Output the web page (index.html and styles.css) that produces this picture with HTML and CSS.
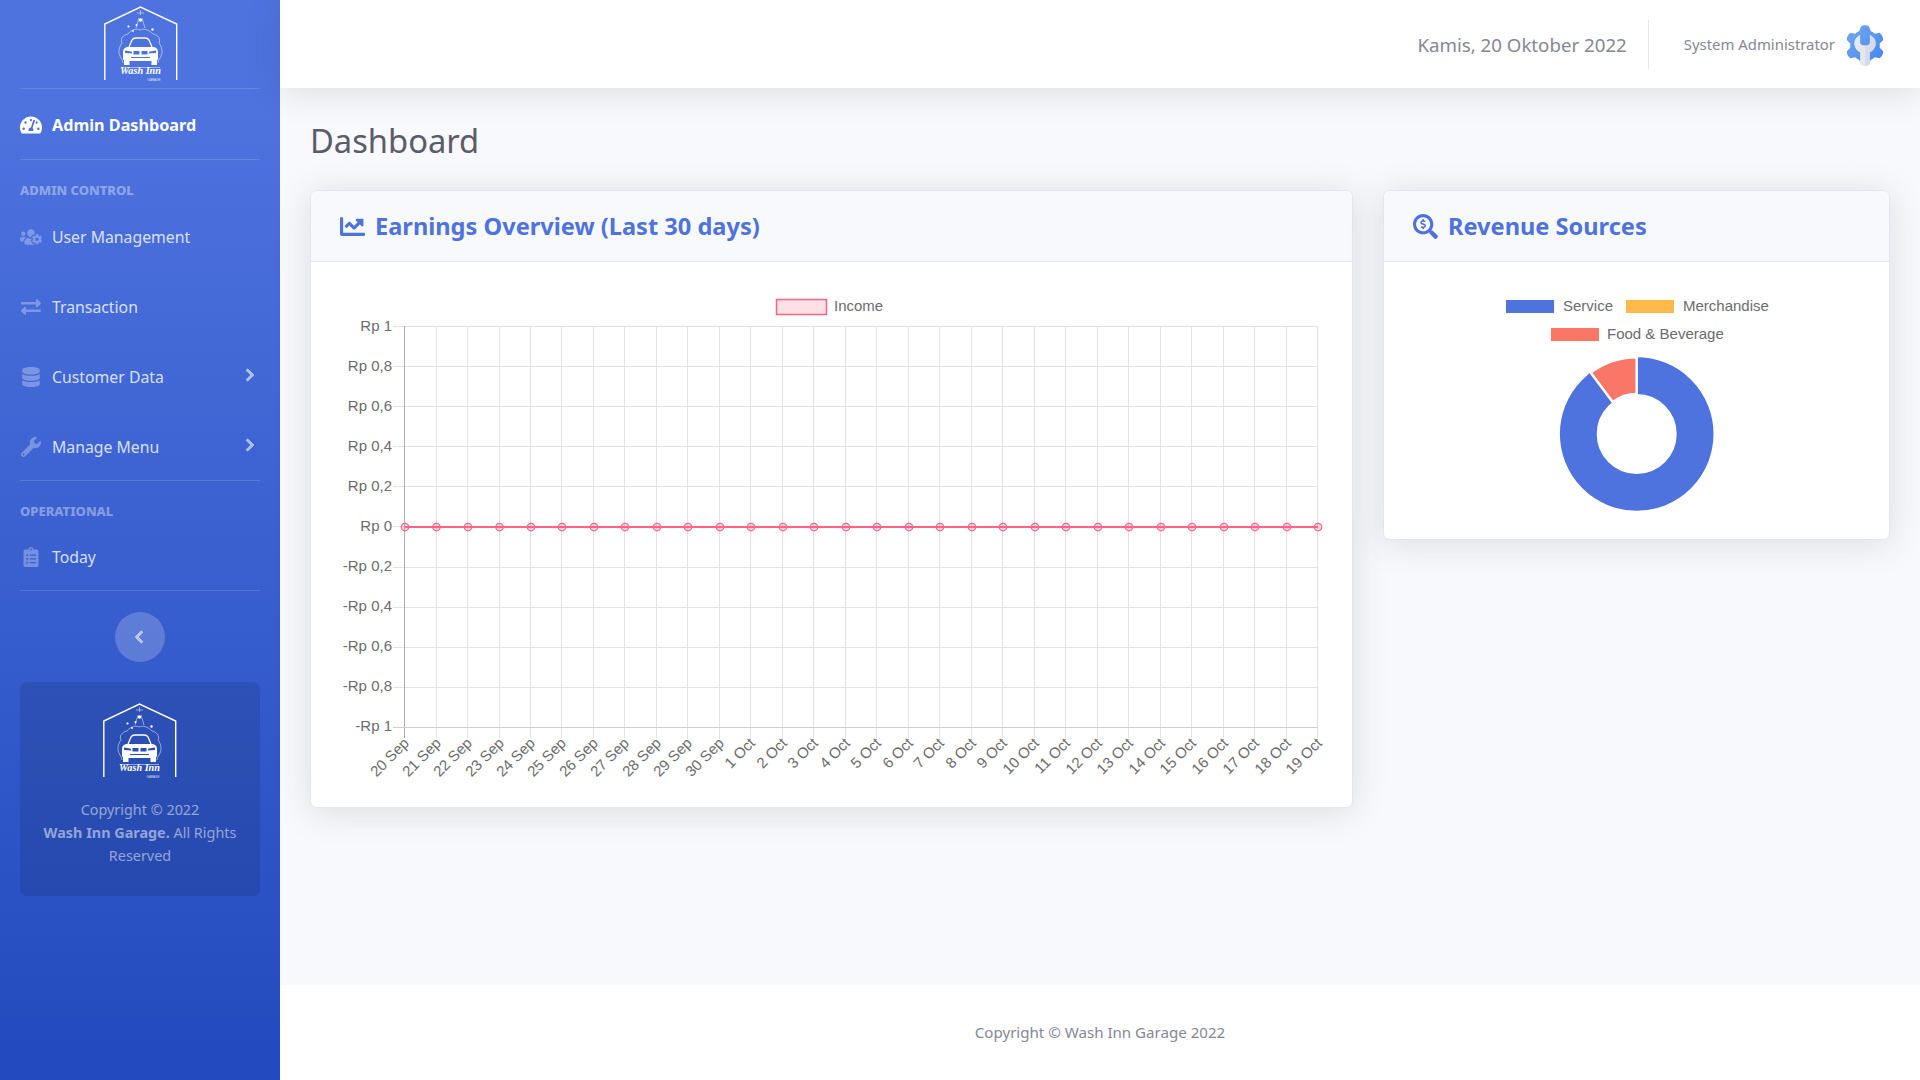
FILE: index.html
```html
<!DOCTYPE html>
<html lang="id">
<head>
<meta charset="utf-8">
<title>Dashboard</title>
<link rel="stylesheet" href="styles.css">
</head>
<body>
<aside class="sidebar">
  <div class="brand">
    <svg class="logo" viewBox="0 0 74 75">
      <path class="logo-line" d="M.8 74V18L36.500 1 72.700 18V74"/>
      <path class="logo-thin" d="M24 28c-5 1-8 5-6 9-3 4-4 9-2 13 1 3 3 4 3 7M49 28c5 1 8 5 6 9 3 4 4 9 2 13-1 3-3 4-3 7M24 28c3-4 8-6 12-4 4-2 9 0 13 4M17 61.500H56"/>
      <path class="logo-thin" d="M36.500 4V9M33 7H40M32 22L35 12M41 22L38 12"/>
      <circle class="logo-fill" cx="36.500" cy="14" r="1.700"/>
      <circle class="logo-fill" cx="24.500" cy="20.500" r="1.100"/>
      <circle class="logo-fill" cx="32.500" cy="19" r="1"/>
      <circle class="logo-fill" cx="48.500" cy="23.500" r="1.200"/>
      <circle class="logo-fill" cx="29" cy="25" r=".9"/>
      <path class="logo-roof" d="M25 41L28 34Q29 32 32 32H41Q44 32 45 34L48 41"/>
      <path class="logo-fill" fill-rule="evenodd" d="M23 41H50Q54 42 54 46V53Q54 54 53 54V59H47.500V55H25.500V59H20V54Q19 54 19 53V46Q19 42 23 41ZM21 44.500L27.500 45.500L28.500 47.500L21 47ZM52 44.500L45.500 45.500L44.500 47.500L52 47ZM29.500 45V48.500H35.500V45ZM37.500 45V48.500H43.500V45ZM27 51V52H46V51Z"/>
      <text class="logo-name" x="36.500" y="68" text-anchor="middle">Wash Inn</text>
      <text class="logo-sub" x="50" y="74.500" text-anchor="middle">GARAGE</text>
    </svg>
  </div>
  <div class="rule"></div>
  <a class="nav-item active">
    <svg class="nav-icon" viewBox="0 0 576 512"><path d="M288 32C128.940 32 0 160.940 0 320c0 52.800 14.250 102.260 39.060 144.800 5.610 9.620 16.300 15.200 27.440 15.200h443c11.140 0 21.830-5.580 27.440-15.200C561.750 422.260 576 372.800 576 320c0-159.060-128.940-288-288-288zm0 64c14.710 0 26.580 10.130 30.320 23.650-1.110 2.260-2.640 4.230-3.450 6.670l-9.220 27.670c-5.130 3.490-10.970 6.010-17.640 6.010-17.670 0-32-14.330-32-32S270.330 96 288 96zM96 384c-17.670 0-32-14.330-32-32s14.330-32 32-32 32 14.330 32 32-14.330 32-32 32zm48-160c-17.670 0-32-14.330-32-32s14.330-32 32-32 32 14.330 32 32-14.330 32-32 32zm246.770-72.410l-61.330 184C343.130 347.330 352 364.540 352 384c0 11.720-3.380 22.550-8.880 32H232.880c-5.500-9.450-8.880-20.280-8.880-32 0-33.940 26.500-61.430 59.900-63.590l61.340-184.010c4.170-12.560 17.730-19.450 30.360-15.170 12.570 4.190 19.350 17.790 15.170 30.360zm14.660 57.200l15.520-46.550c3.470-1.290 7.130-2.230 11.050-2.230 17.670 0 32 14.330 32 32s-14.330 32-32 32c-11.380-.01-20.890-6.280-26.570-15.220zM480 384c-17.670 0-32-14.330-32-32s14.330-32 32-32 32 14.330 32 32-14.330 32-32 32z"/></svg>
    <span>Admin Dashboard</span>
  </a>
  <div class="rule"></div>
  <div class="nav-heading">ADMIN CONTROL</div>
  <a class="nav-item">
    <svg class="nav-icon" viewBox="0 0 640 512"><path d="M610.500 341.300c2.600-14.100 2.600-28.500 0-42.600l25.800-14.900c3-1.700 4.300-5.200 3.300-8.500-6.700-21.600-18.200-41.200-33.200-57.400-2.300-2.500-6-3.100-9-1.400l-25.800 14.900c-10.900-9.300-23.400-16.500-36.900-21.300v-29.800c0-3.400-2.400-6.400-5.700-7.100-22.300-5-45-4.800-66.200 0-3.300.7-5.700 3.700-5.700 7.100v29.800c-13.500 4.800-26 12-36.900 21.300l-25.800-14.900c-2.900-1.700-6.700-1.100-9 1.400-15 16.200-26.500 35.800-33.200 57.400-1 3.300.4 6.800 3.300 8.500l25.800 14.900c-2.600 14.100-2.600 28.500 0 42.600l-25.800 14.900c-3 1.700-4.300 5.200-3.300 8.500 6.700 21.600 18.200 41.100 33.200 57.400 2.300 2.500 6 3.100 9 1.400l25.800-14.900c10.900 9.300 23.400 16.500 36.900 21.300v29.800c0 3.400 2.400 6.400 5.700 7.100 22.300 5 45 4.800 66.200 0 3.300-.7 5.700-3.700 5.700-7.100v-29.800c13.500-4.800 26-12 36.900-21.300l25.800 14.900c2.900 1.700 6.700 1.100 9-1.400 15-16.200 26.500-35.800 33.200-57.400 1-3.300-.4-6.800-3.300-8.500l-25.800-14.900zM496 368.500c-26.800 0-48.500-21.800-48.500-48.500s21.800-48.500 48.500-48.500 48.500 21.800 48.500 48.500-21.700 48.500-48.500 48.500zM96 224c35.300 0 64-28.700 64-64s-28.700-64-64-64-64 28.700-64 64 28.700 64 64 64zm224 32c1.900 0 3.700-.5 5.600-.6 8.300-21.700 20.500-42.100 36.300-59.200 7.400-8 17.900-12.600 28.900-12.600 6.900 0 13.700 1.800 19.600 5.300l7.900 4.600c.8-.5 1.600-.9 2.400-1.400 7-14.600 11.200-30.800 11.200-48 0-61.900-50.100-112-112-112S208 82.100 208 144c0 61.900 50.100 112 112 112zm105.200 194.500c-2.300-1.200-4.600-2.600-6.800-3.900-8.200 4.800-15.300 9.800-27.500 9.800-10.900 0-21.400-4.600-28.900-12.600-18.300-19.800-32.300-43.900-40.200-69.600-10.700-34.500 24.900-49.700 25.800-50.300-.1-2.600-.1-5.200 0-7.800l-7.900-4.600c-3.800-2.200-7-5-9.800-8.100-3.300.2-6.500.6-9.800.6-24.600 0-47.600-6-68.500-16h-8.300C179.600 288 128 339.600 128 403.200V432c0 26.500 21.500 48 48 48h255.400c-3.700-6-6.200-12.800-6.200-20.300v-9.200zM173.100 274.600C161.500 263.100 145.600 256 128 256H64c-35.300 0-64 28.700-64 64v32c0 17.700 14.300 32 32 32h65.900c6.300-47.400 34.900-87.300 75.200-109.400z"/></svg>
    <span>User Management</span>
  </a>
  <a class="nav-item">
    <svg class="nav-icon" viewBox="0 0 512 512"><path d="M0 168v-16c0-13.255 10.745-24 24-24h360V80c0-21.367 25.899-32.042 40.971-16.971l80 80c9.372 9.373 9.372 24.569 0 33.941l-80 80C409.956 271.982 384 261.456 384 240v-48H24c-13.255 0-24-10.745-24-24zm488 152H128v-48c0-21.314-25.862-32.080-40.971-16.971l-80 80c-9.372 9.373-9.372 24.569 0 33.941l80 80C102.057 463.997 128 453.437 128 432v-48h360c13.255 0 24-10.745 24-24v-16c0-13.255-10.745-24-24-24z"/></svg>
    <span>Transaction</span>
  </a>
  <a class="nav-item">
    <svg class="nav-icon" viewBox="0 0 448 512"><path d="M448 73.143v45.714C448 159.143 347.667 192 224 192S0 159.143 0 118.857V73.143C0 32.857 100.333 0 224 0s224 32.857 224 73.143zM448 176v102.857C448 319.143 347.667 352 224 352S0 319.143 0 278.857V176c48.125 33.143 136.208 48.572 224 48.572S399.874 209.143 448 176zm0 160v102.857C448 479.143 347.667 512 224 512S0 479.143 0 438.857V336c48.125 33.143 136.208 48.572 224 48.572S399.874 369.143 448 336z"/></svg>
    <span>Customer Data</span>
    <svg class="chevron" viewBox="0 0 320 512"><path d="M285.476 272.971L91.132 467.314c-9.373 9.373-24.569 9.373-33.941 0l-22.667-22.667c-9.357-9.357-9.375-24.522-.04-33.901L188.505 256 34.484 101.255c-9.335-9.379-9.317-24.544.04-33.901l22.667-22.667c9.373-9.373 24.569-9.373 33.941 0L285.475 239.030c9.373 9.372 9.373 24.568.001 33.941z"/></svg>
  </a>
  <a class="nav-item">
    <svg class="nav-icon" viewBox="0 0 512 512"><path d="M507.730 109.100c-2.240-9.030-13.540-12.090-20.120-5.510l-74.360 74.360-67.880-11.310-11.310-67.880 74.360-74.360c6.620-6.620 3.430-17.900-5.660-20.160-47.380-11.740-99.550.91-136.580 37.930-39.640 39.640-50.550 97.100-34.050 147.200L18.740 402.760c-24.990 24.990-24.990 65.510 0 90.500 24.990 24.990 65.510 24.990 90.500 0l213.210-213.210c50.120 16.710 107.470 5.680 147.370-34.220 37.070-37.070 49.700-89.320 37.910-136.730zM64 472c-13.250 0-24-10.750-24-24 0-13.260 10.750-24 24-24s24 10.740 24 24c0 13.250-10.750 24-24 24z"/></svg>
    <span>Manage Menu</span>
    <svg class="chevron" viewBox="0 0 320 512"><path d="M285.476 272.971L91.132 467.314c-9.373 9.373-24.569 9.373-33.941 0l-22.667-22.667c-9.357-9.357-9.375-24.522-.04-33.901L188.505 256 34.484 101.255c-9.335-9.379-9.317-24.544.04-33.901l22.667-22.667c9.373-9.373 24.569-9.373 33.941 0L285.475 239.030c9.373 9.372 9.373 24.568.001 33.941z"/></svg>
  </a>
  <div class="rule"></div>
  <div class="nav-heading">OPERATIONAL</div>
  <a class="nav-item">
    <svg class="nav-icon" viewBox="0 0 384 512"><path d="M336 64h-80c0-35.300-28.700-64-64-64s-64 28.700-64 64H48C21.500 64 0 85.500 0 112v352c0 26.500 21.500 48 48 48h288c26.500 0 48-21.500 48-48V112c0-26.500-21.500-48-48-48zM96 424c-13.300 0-24-10.700-24-24s10.700-24 24-24 24 10.700 24 24-10.700 24-24 24zm0-96c-13.300 0-24-10.700-24-24s10.700-24 24-24 24 10.700 24 24-10.700 24-24 24zm0-96c-13.300 0-24-10.700-24-24s10.700-24 24-24 24 10.700 24 24-10.700 24-24 24zm96-192c13.300 0 24 10.700 24 24s-10.700 24-24 24-24-10.700-24-24 10.700-24 24-24zm128 368c0 4.400-3.600 8-8 8H168c-4.400 0-8-3.600-8-8v-16c0-4.400 3.600-8 8-8h144c4.400 0 8 3.600 8 8v16zm0-96c0 4.400-3.600 8-8 8H168c-4.400 0-8-3.600-8-8v-16c0-4.400 3.600-8 8-8h144c4.400 0 8 3.600 8 8v16zm0-96c0 4.400-3.600 8-8 8H168c-4.400 0-8-3.600-8-8v-16c0-4.400 3.600-8 8-8h144c4.400 0 8 3.600 8 8v16z"/></svg>
    <span>Today</span>
  </a>
  <div class="rule"></div>
  <button class="toggle" type="button">
    <svg class="toggle-icon" viewBox="0 0 320 512"><path d="M34.520 239.030L228.870 44.690c9.370-9.370 24.570-9.370 33.940 0l22.670 22.670c9.360 9.360 9.370 24.520.04 33.900L131.490 256l154.020 154.750c9.340 9.380 9.320 24.540-.04 33.900l-22.670 22.670c-9.370 9.370-24.570 9.370-33.940 0L34.520 272.970c-9.370-9.370-9.370-24.570 0-33.940z"/></svg>
  </button>
  <div class="side-card">
    <svg class="logo" viewBox="0 0 74 75">
      <path class="logo-line" d="M.8 74V18L36.500 1 72.700 18V74"/>
      <path class="logo-thin" d="M24 28c-5 1-8 5-6 9-3 4-4 9-2 13 1 3 3 4 3 7M49 28c5 1 8 5 6 9 3 4 4 9 2 13-1 3-3 4-3 7M24 28c3-4 8-6 12-4 4-2 9 0 13 4M17 61.500H56"/>
      <path class="logo-thin" d="M36.500 4V9M33 7H40M32 22L35 12M41 22L38 12"/>
      <circle class="logo-fill" cx="36.500" cy="14" r="1.700"/>
      <circle class="logo-fill" cx="24.500" cy="20.500" r="1.100"/>
      <circle class="logo-fill" cx="32.500" cy="19" r="1"/>
      <circle class="logo-fill" cx="48.500" cy="23.500" r="1.200"/>
      <circle class="logo-fill" cx="29" cy="25" r=".9"/>
      <path class="logo-roof" d="M25 41L28 34Q29 32 32 32H41Q44 32 45 34L48 41"/>
      <path class="logo-fill" fill-rule="evenodd" d="M23 41H50Q54 42 54 46V53Q54 54 53 54V59H47.500V55H25.500V59H20V54Q19 54 19 53V46Q19 42 23 41ZM21 44.500L27.500 45.500L28.500 47.500L21 47ZM52 44.500L45.500 45.500L44.500 47.500L52 47ZM29.500 45V48.500H35.500V45ZM37.500 45V48.500H43.500V45ZM27 51V52H46V51Z"/>
      <text class="logo-name" x="36.500" y="68" text-anchor="middle">Wash Inn</text>
      <text class="logo-sub" x="50" y="74.500" text-anchor="middle">GARAGE</text>
    </svg>
    <p>Copyright © 2022<br><b>Wash Inn Garage.</b> All Rights<br>Reserved</p>
  </div>
</aside>

<div class="main">
  <header class="topbar">
    <span class="date">Kamis, 20 Oktober 2022</span>
    <span class="divider"></span>
    <span class="user">System Administrator</span>
    <svg class="avatar" viewBox="0 0 38 42">
      <defs><linearGradient id="gear" x1="0" y1="0" x2="1" y2="1"><stop offset="0" stop-color="#74a8f2"/><stop offset="1" stop-color="#3f86ee"/></linearGradient></defs>
      <path fill="url(#gear)" d="M15 1.500C17 0 21 0 23 1.500L25 6.500C26.500 7 28 8 29 9L34 8C36 9.500 38 13 37.500 15.500L34 19C34.200 20.500 34.200 22 34 23L37.500 27C38 29.500 36 33 34 34L29 33C28 34 26.500 35 25 35.500L23 40C21 41.500 17 41.500 15 40L13 35.500C11.500 35 10 34 9 33L4 34C2 33 0 29.500.5 27L4 23C3.800 22 3.800 20.500 4 19L.5 15.500C0 13 2 9.500 4 8L9 9C10 8 11.500 7 13 6.500Z"/>
      <path fill="#e4e6f0" d="M14 10V18C14 20 16 21 19 21C22 21 24 20 24 18V10C28 12 30 15 30 19C30 23 27.500 26.500 24 28V39C24 41 22 42 19 42C16 42 14 41 14 39V28C10.500 26.500 8 23 8 19C8 15 10 12 14 10Z"/>
      <path fill="#c9cddc" d="M19 21C22 21 24 20 24 18V10C28 12 30 15 30 19C30 23 27.500 26.500 24 28V39C24 41 22 42 19 42Z" opacity=".45"/>
    </svg>
  </header>

  <main class="content">
    <h1 class="page-title">Dashboard</h1>
    <div class="cards">
      <section class="card">
        <div class="card-head">
          <svg class="card-icon" viewBox="0 0 512 512"><path d="M496 384H64V80c0-8.840-7.160-16-16-16H16C7.160 64 0 71.160 0 80v336c0 17.670 14.330 32 32 32h464c8.840 0 16-7.160 16-16v-32c0-8.840-7.160-16-16-16zM464 96H345.940c-21.380 0-32.090 25.850-16.970 40.970l32.400 32.400L288 242.750l-73.370-73.370c-12.500-12.500-32.760-12.500-45.250 0l-68.690 68.690c-6.250 6.250-6.250 16.380 0 22.630l22.620 22.620c6.250 6.250 16.380 6.250 22.630 0L192 237.250l73.370 73.370c12.500 12.500 32.760 12.500 45.250 0l96-96 32.400 32.400c15.120 15.120 40.970 4.410 40.970-16.970V112c0-8.840-7.160-16-16-16z"/></svg>
          <h2>Earnings Overview (Last 30 days)</h2>
        </div>
        <svg class="chart" viewBox="311 262 1041 545" width="1041" height="545">
          <rect class="legend-box" x="776.500" y="299.500" width="50" height="15"/>
          <text class="axis-text" x="834" y="311">Income</text>
          <path class="grid" d="M393 326.500H1318M393 366.500H1318M393 406.500H1318M393 446.500H1318M393 486.500H1318M393 526.500H1318M393 567.500H1318M393 607.500H1318M393 647.500H1318M393 687.500H1318"/>
          <path class="grid" d="M436.500 326V738M467.500 326V738M499.500 326V738M530.500 326V738M561.500 326V738M593.500 326V738M624.500 326V738M656.500 326V738M687.500 326V738M719.500 326V738M750.500 326V738M782.500 326V738M813.500 326V738M845.500 326V738M876.500 326V738M908.500 326V738M939.500 326V738M971.500 326V738M1002.500 326V738M1034.500 326V738M1065.500 326V738M1097.500 326V738M1128.500 326V738M1160.500 326V738M1191.500 326V738M1223.500 326V738M1254.500 326V738M1286.500 326V738M1317.500 326V738"/>
          <path class="axis" d="M404.500 326V738"/>
          <path class="axis-bottom" d="M393 727.500H1318"/>
          <g class="y-labels">
            <text x="392" y="331">Rp 1</text><text x="392" y="371">Rp 0,8</text><text x="392" y="411">Rp 0,6</text><text x="392" y="451">Rp 0,4</text><text x="392" y="491">Rp 0,2</text><text x="392" y="531">Rp 0</text><text x="392" y="571">-Rp 0,2</text><text x="392" y="611">-Rp 0,4</text><text x="392" y="651">-Rp 0,6</text><text x="392" y="691">-Rp 0,8</text><text x="392" y="731">-Rp 1</text>
          </g>
          <path class="series" d="M405 527H1318"/>
          <g class="points">
            <circle cx="405" cy="527" r="3.750"/><circle cx="436.500" cy="527" r="3.750"/><circle cx="468" cy="527" r="3.750"/><circle cx="499.500" cy="527" r="3.750"/><circle cx="531" cy="527" r="3.750"/><circle cx="562" cy="527" r="3.750"/><circle cx="594" cy="527" r="3.750"/><circle cx="625" cy="527" r="3.750"/><circle cx="657" cy="527" r="3.750"/><circle cx="688" cy="527" r="3.750"/><circle cx="720" cy="527" r="3.750"/><circle cx="751" cy="527" r="3.750"/><circle cx="783" cy="527" r="3.750"/><circle cx="814" cy="527" r="3.750"/><circle cx="846" cy="527" r="3.750"/><circle cx="877" cy="527" r="3.750"/><circle cx="909" cy="527" r="3.750"/><circle cx="940" cy="527" r="3.750"/><circle cx="972" cy="527" r="3.750"/><circle cx="1003" cy="527" r="3.750"/><circle cx="1035" cy="527" r="3.750"/><circle cx="1066" cy="527" r="3.750"/><circle cx="1098" cy="527" r="3.750"/><circle cx="1129" cy="527" r="3.750"/><circle cx="1161" cy="527" r="3.750"/><circle cx="1192" cy="527" r="3.750"/><circle cx="1224" cy="527" r="3.750"/><circle cx="1255" cy="527" r="3.750"/><circle cx="1287" cy="527" r="3.750"/><circle cx="1318" cy="527" r="3.750"/>
          </g>
          <g class="x-labels">
            <text transform="translate(410 744) rotate(-45)">20 Sep</text>
            <text transform="translate(442 744) rotate(-45)">21 Sep</text>
            <text transform="translate(473 744) rotate(-45)">22 Sep</text>
            <text transform="translate(505 744) rotate(-45)">23 Sep</text>
            <text transform="translate(536 744) rotate(-45)">24 Sep</text>
            <text transform="translate(567 744) rotate(-45)">25 Sep</text>
            <text transform="translate(599 744) rotate(-45)">26 Sep</text>
            <text transform="translate(630 744) rotate(-45)">27 Sep</text>
            <text transform="translate(662 744) rotate(-45)">28 Sep</text>
            <text transform="translate(693 744) rotate(-45)">29 Sep</text>
            <text transform="translate(725 744) rotate(-45)">30 Sep</text>
            <text transform="translate(756 744) rotate(-45)">1 Oct</text>
            <text transform="translate(788 744) rotate(-45)">2 Oct</text>
            <text transform="translate(819 744) rotate(-45)">3 Oct</text>
            <text transform="translate(851 744) rotate(-45)">4 Oct</text>
            <text transform="translate(882 744) rotate(-45)">5 Oct</text>
            <text transform="translate(914 744) rotate(-45)">6 Oct</text>
            <text transform="translate(945 744) rotate(-45)">7 Oct</text>
            <text transform="translate(977 744) rotate(-45)">8 Oct</text>
            <text transform="translate(1008 744) rotate(-45)">9 Oct</text>
            <text transform="translate(1040 744) rotate(-45)">10 Oct</text>
            <text transform="translate(1071 744) rotate(-45)">11 Oct</text>
            <text transform="translate(1103 744) rotate(-45)">12 Oct</text>
            <text transform="translate(1134 744) rotate(-45)">13 Oct</text>
            <text transform="translate(1166 744) rotate(-45)">14 Oct</text>
            <text transform="translate(1197 744) rotate(-45)">15 Oct</text>
            <text transform="translate(1229 744) rotate(-45)">16 Oct</text>
            <text transform="translate(1260 744) rotate(-45)">17 Oct</text>
            <text transform="translate(1292 744) rotate(-45)">18 Oct</text>
            <text transform="translate(1323 744) rotate(-45)">19 Oct</text>
          </g>
        </svg>
      </section>

      <section class="card">
        <div class="card-head">
          <svg class="card-icon" viewBox="0 0 512 512"><path d="M505.040 442.660l-99.710-99.690c-4.500-4.500-10.600-7-17-7h-16.300c27.600-35.300 44-79.690 44-127.990C416.030 93.090 322.920 0 208.020 0S0 93.090 0 207.980s93.110 207.980 208.020 207.980c48.300 0 92.710-16.400 128.010-44v16.300c0 6.400 2.500 12.500 7 17l99.710 99.690c9.400 9.400 24.600 9.400 33.900 0l28.300-28.300c9.400-9.400 9.400-24.590.1-33.990zm-297.020-90.700c-79.540 0-144-64.340-144-143.980 0-79.530 64.350-143.980 144-143.980 79.540 0 144 64.340 144 143.980 0 79.530-64.350 143.980-144 143.980zm27.110-152.540l-45.010-13.500c-5.160-1.550-8.770-6.780-8.770-12.730 0-7.270 5.300-13.190 11.800-13.190h28.110c4.560 0 8.960 1.290 12.820 3.720 3.240 2.030 7.360 1.910 10.130-.73l11.750-11.210c3.530-3.370 3.330-9.210-.57-12.140-9.100-6.830-20.080-10.770-31.370-11.350V112c0-4.420-3.580-8-8-8h-16c-4.420 0-8 3.580-8 8v16.120c-23.630.63-42.680 20.550-42.680 45.070 0 19.970 12.990 37.810 31.580 43.390l45.010 13.500c5.160 1.550 8.770 6.780 8.770 12.730 0 7.270-5.300 13.190-11.800 13.190h-28.100c-4.560 0-8.960-1.290-12.820-3.720-3.240-2.030-7.360-1.910-10.130.73l-11.750 11.210c-3.530 3.370-3.330 9.210.57 12.140 9.100 6.830 20.080 10.770 31.370 11.350V304c0 4.420 3.580 8 8 8h16c4.420 0 8-3.580 8-8v-16.120c23.630-.63 42.680-20.540 42.680-45.070 0-19.970-12.990-37.810-31.590-43.390z"/></svg>
          <h2>Revenue Sources</h2>
        </div>
        <svg class="chart" viewBox="1384 262 505 277" width="505" height="277">
          <rect class="sw-blue" x="1506" y="300" width="48" height="13"/>
          <text class="axis-text" x="1563" y="311">Service</text>
          <rect class="sw-orange" x="1626" y="300" width="48" height="13"/>
          <text class="axis-text" x="1683" y="311">Merchandise</text>
          <rect class="sw-red" x="1551" y="328" width="48" height="13"/>
          <text class="axis-text" x="1607" y="339">Food &amp; Beverage</text>
          <circle class="ring-blue" cx="1636.700" cy="434" r="58.400"/>
          <path class="sw-red seg" d="M1636.700 357.200A76.800 76.800 0 0 0 1590.600 372.600L1612.700 402A40 40 0 0 1 1636.700 394Z"/>
        </svg>
      </section>
    </div>
  </main>

  <footer class="footer">Copyright © Wash Inn Garage 2022</footer>
</div>
</body>
</html>
```
FILE: styles.css
```css
* { box-sizing: border-box; }
html, body { height: 100%; }
body {
  margin: 0;
  display: flex;
  height: 100vh;
  overflow: hidden;
  background: #f8f9fc;
  color: #858796;
  font-family: "Noto Sans", "Open Sans", sans-serif;
}

/* Sidebar */
.sidebar {
  width: 280px;
  flex: none;
  display: flex;
  flex-direction: column;
  background: linear-gradient(180deg, #4e73df 10%, #224abe 100%);
}
.brand { height: 88px; padding: 6px 0 0 1px; display: flex; justify-content: center; }
.logo { width: 74px; height: 75px; display: block; flex: none; }
.logo-line { fill: none; stroke: #fff; stroke-width: 1.400; }
.logo-thin { fill: none; stroke: #fff; stroke-width: .6; opacity: .85; }
.logo-roof { fill: none; stroke: #fff; stroke-width: 1.300; }
.logo-fill { fill: #fff; }
.logo-name { fill: #fff; font: italic 700 10.200px "Liberation Serif", serif; }
.logo-sub { fill: #fff; font: 400 3px "Liberation Sans", sans-serif; opacity: .8; }
.rule { height: 1px; margin: 0 20px; background: rgba(255, 255, 255, .15); flex: none; }
.nav-item {
  position: relative;
  height: 70px;
  flex: none;
  padding: 0 25px 0 20px;
  display: flex;
  align-items: center;
  transform: translateY(2px);
  color: rgba(255, 255, 255, .8);
  font-size: 15.800px;
}
.nav-item span { flex: 1; margin-left: 32px; white-space: nowrap; }
.nav-icon {
  position: absolute;
  left: 20px;
  top: 50%;
  width: 22px;
  height: 20px;
  margin-top: -10px;
  fill: rgba(255, 255, 255, .3);
}
.nav-item.active { color: #fff; font-weight: 700; font-size: 16.200px; transform: translateY(1px); }
.nav-item.active .nav-icon { fill: #fff; }
.chevron {
  width: 10px;
  height: 14px;
  margin-top: -4px;
  fill: rgba(255, 255, 255, .55);
  stroke: rgba(255, 255, 255, .55);
  stroke-width: 30;
}
.nav-heading {
  padding: 21px 20px 0;
  height: 39.500px;
  line-height: 18.500px;
  font-size: 13px;
  font-weight: 800;
  color: rgba(255, 255, 255, .4);
}
.toggle {
  width: 50px;
  height: 50px;
  flex: none;
  margin: 21px auto 20px;
  padding: 0 2px 1px 0;
  border: 0;
  border-radius: 50%;
  background: rgba(255, 255, 255, .2);
  display: flex;
  align-items: center;
  justify-content: center;
}
.toggle-icon {
  width: 10px;
  height: 14px;
  fill: rgba(255, 255, 255, .55);
  stroke: rgba(255, 255, 255, .55);
  stroke-width: 30;
}
.side-card {
  width: 240px;
  height: 214px;
  margin: 0 20px;
  padding: 21px 10px 0;
  border-radius: 7px;
  background: rgba(0, 0, 0, .1);
  display: flex;
  flex-direction: column;
  align-items: center;
}
.side-card p {
  margin: 20px 0 0;
  text-align: center;
  font-size: 14.400px;
  line-height: 23px;
  color: rgba(255, 255, 255, .5);
}

/* Main column */
.main { flex: 1; min-width: 0; display: flex; flex-direction: column; }
.topbar {
  height: 88px;
  flex: none;
  position: relative;
  display: flex;
  align-items: center;
  justify-content: flex-end;
  padding-right: 36px;
  background: #fff;
  box-shadow: 0 3.750px 35px rgba(58, 59, 69, .15);
}
.date { font-size: 18.700px; }
.divider { width: 1px; height: 49px; margin: 0 35px 0 21px; background: #e3e6f0; }
.user { font-size: 14.900px; margin-right: 11px; }
.avatar { width: 38px; height: 41px; margin-top: 2px; }
.content { flex: 1; padding: 32px 30px 0; min-height: 0; }
.page-title {
  margin: 0 0 28px;
  font-size: 32.700px;
  line-height: 42px;
  font-weight: 400;
  color: #5a5c69;
}
.cards { display: grid; grid-template-columns: 1043px 507px; column-gap: 30px; align-items: start; }
.card {
  background: #fff;
  border: 1px solid #e3e6f0;
  border-radius: 7px;
  overflow: hidden;
  box-shadow: 0 3.750px 35px rgba(58, 59, 69, .15);
}
.card-head {
  height: 71px;
  padding: 0 29px;
  display: flex;
  align-items: center;
  background: #f8f9fc;
  border-bottom: 1px solid #e3e6f0;
}
.card-icon { width: 25px; height: 25px; fill: #4e73df; flex: none; margin-right: 10px; }
.card-head h2 { margin: 0; font-size: 23.600px; font-weight: 700; color: #4e73df; }
.chart { display: block; }
.grid { fill: none; stroke: #e3e3e3; stroke-width: 1; }
.axis { fill: none; stroke: #b0b0b0; stroke-width: 1; }
.axis-bottom { fill: none; stroke: #cfcfcf; stroke-width: 1; }
.axis-text, .y-labels text, .x-labels text {
  fill: #6c6c6c;
  font: 15px "Liberation Sans", Arial, sans-serif;
}
.y-labels text { text-anchor: end; }
.x-labels text { text-anchor: end; }
.legend-box { fill: rgba(255, 99, 132, .2); stroke: #ff6384; stroke-width: 1.500; }
.series { fill: none; stroke: #ff6384; stroke-width: 1.800; }
.points circle { fill: rgba(255, 99, 132, .25); stroke: #ff6384; stroke-width: 1.250; }
.sw-blue { fill: #4e73df; }
.sw-orange { fill: #ffba4a; }
.sw-red { fill: #fa7768; }
.ring-blue { fill: none; stroke: #4e73df; stroke-width: 36.800; }
.seg { stroke: #fff; stroke-width: 2.500; }

.footer {
  height: 95.500px;
  flex: none;
  display: flex;
  align-items: center;
  justify-content: center;
  background: #fff;
  font-size: 15.100px;
}
```
